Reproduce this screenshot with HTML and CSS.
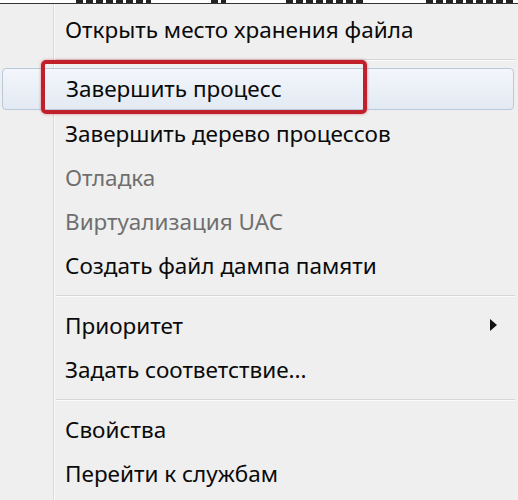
FILE: index.html
```html
<!DOCTYPE html>
<html lang="ru">
<head>
  <meta charset="UTF-8">
  <title>Диспетчер задач</title>
  <link rel="stylesheet" href="styles.css">
</head>
<body>
  <div class="strip">
    <span class="blot w75"></span>
    <span class="blot w15"></span>
    <span class="blot w80"></span>
    <span class="blot w90"></span>
  </div>
  <div class="menu">
    <div class="item">Открыть место хранения файла</div>
    <div class="sep"></div>
    <div class="item hover">
      Завершить процесс
      <div class="mark"></div>
    </div>
    <div class="item">Завершить дерево процессов</div>
    <div class="item off">Отладка</div>
    <div class="item off">Виртуализация UAC</div>
    <div class="item">Создать файл дампа памяти</div>
    <div class="sep"></div>
    <div class="item">Приоритет <span class="arrow"></span></div>
    <div class="item">Задать соответствие...</div>
    <div class="sep"></div>
    <div class="item">Свойства</div>
    <div class="item">Перейти к службам</div>
  </div>
</body>
</html>
```

FILE: styles.css
```css
body {
  margin: 0;
  background: #fff;
  font-family: "Noto Sans", "Open Sans", sans-serif;
  overflow: hidden;
}
/* bottom edge of the row above the menu */
.strip {
  display: flex;
  gap: 60px;
  height: 3px;
  padding-left: 76px;
  border-bottom: 1px solid #333;
}
.blot {
  height: 3px;
  background: repeating-linear-gradient(90deg, #222 0 7px, transparent 7px 10px);
}
.w75 { width: 75px; }
.w15 { width: 15px; }
.w80 { width: 80px; }
.w90 { width: 90px; }
.menu {
  position: relative;
  background: #efefef;
  padding-top: 4px;
  height: 496px;
}
.menu::before {
  content: "";
  position: absolute;
  left: 53px;
  top: 0;
  bottom: 0;
  width: 1px;
  background: #dadada;
  border-right: 1px solid #fafafa;
}
.item {
  position: relative;
  height: 44px;
  line-height: 44px;
  padding-left: 65px;
  font-size: 22.5px;
  color: #0a0a0a;
  white-space: nowrap;
}
.off {
  color: #6f6f6f;
}
.sep {
  height: 16px;
  margin-left: 56px;
  position: relative;
}
.sep::after {
  content: "";
  position: absolute;
  left: 0;
  right: 3px;
  top: 7px;
  height: 1px;
  background: #d6d6d6;
  border-bottom: 1px solid #fbfbfb;
}
.hover {
  margin: 0 4px 2px 2px;
  height: 40px;
  line-height: 40px;
  padding-left: 63px;
  border: 1px solid #b9c9dc;
  border-radius: 4px;
  background: linear-gradient(#f3f6fb, #e3eaf3);
}
.mark {
  position: absolute;
  left: 38px;
  top: -9px;
  width: 318px;
  height: 46px;
  border: 4px solid #c1202b;
  border-radius: 5px;
  box-shadow: 0 0 3px rgba(193, 32, 43, 0.5);
}
.arrow {
  position: absolute;
  right: 21px;
  top: 15px;
  border-left: 7px solid #111;
  border-top: 6px solid transparent;
  border-bottom: 6px solid transparent;
}
```
